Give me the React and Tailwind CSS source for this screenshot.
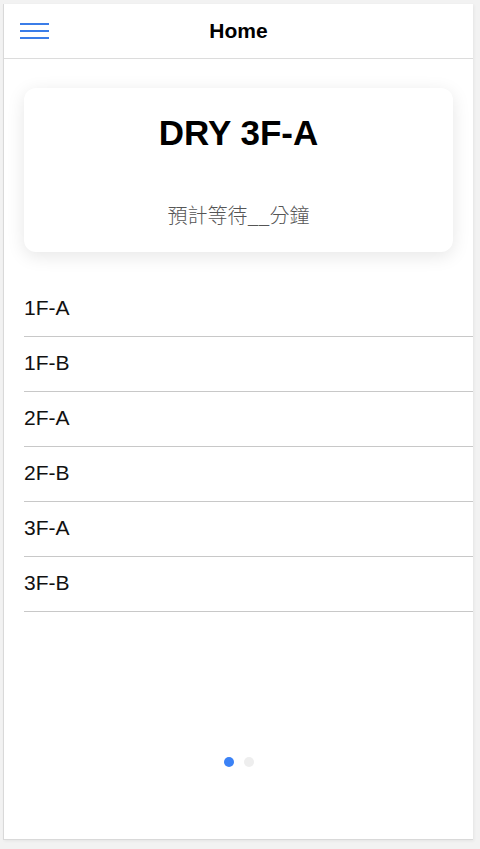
export default function App() {
  const items = ["1F-A", "1F-B", "2F-A", "2F-B", "3F-A", "3F-B"];
  return (
    <div className="min-h-[849px] bg-[#f2f2f2] pt-[4px] pl-[3px]" style={{ fontFamily: '"Liberation Sans", Arial, "Noto Sans CJK TC", sans-serif' }}>
      <div className="w-[470px] h-[836px] bg-white border-l border-b border-[#d9d9d9] shadow-[1px_1px_3px_rgba(0,0,0,0.06)] flex flex-col">
        <div className="relative h-[55px] flex items-center justify-center border-b border-[#dcdcdc] shrink-0">
          <button className="absolute left-[16px] top-[19px] flex flex-col gap-[5px]">
            <span className="block w-[29px] h-[2px] bg-[#3b7de8]"></span>
            <span className="block w-[29px] h-[2px] bg-[#3b7de8]"></span>
            <span className="block w-[29px] h-[2px] bg-[#3b7de8]"></span>
          </button>
          <span className="text-[21px] font-bold text-black">Home</span>
        </div>
        <div className="px-[20px] pt-[29px]">
          <div className="h-[164px] rounded-[12px] bg-white shadow-[0_4px_18px_rgba(0,0,0,0.1)] flex flex-col items-center">
            <div className="mt-[25px] text-[35px] leading-[40px] font-bold text-black">DRY 3F-A</div>
            <div className="mt-[49px] text-[20px] leading-[26px] text-[#555]" style={{ fontFamily: '"Noto Sans CJK TC", sans-serif', fontWeight: 300 }}>預計等待__分鐘</div>
          </div>
        </div>
        <div className="pl-[20px] mt-[30px]">
          {items.map((t) => (
            <div key={t} className="h-[55px] pb-[3px] border-b border-[#c8c8c8] flex items-center text-[21px] text-[#111]">{t}</div>
          ))}
        </div>
        <div className="flex-1"></div>
        <div className="flex justify-center gap-[10px] mb-[72px]">
          <span className="block w-[10px] h-[10px] rounded-full bg-[#3b82f6]"></span>
          <span className="block w-[10px] h-[10px] rounded-full bg-[#eeeeee]"></span>
        </div>
      </div>
    </div>
  );
}
